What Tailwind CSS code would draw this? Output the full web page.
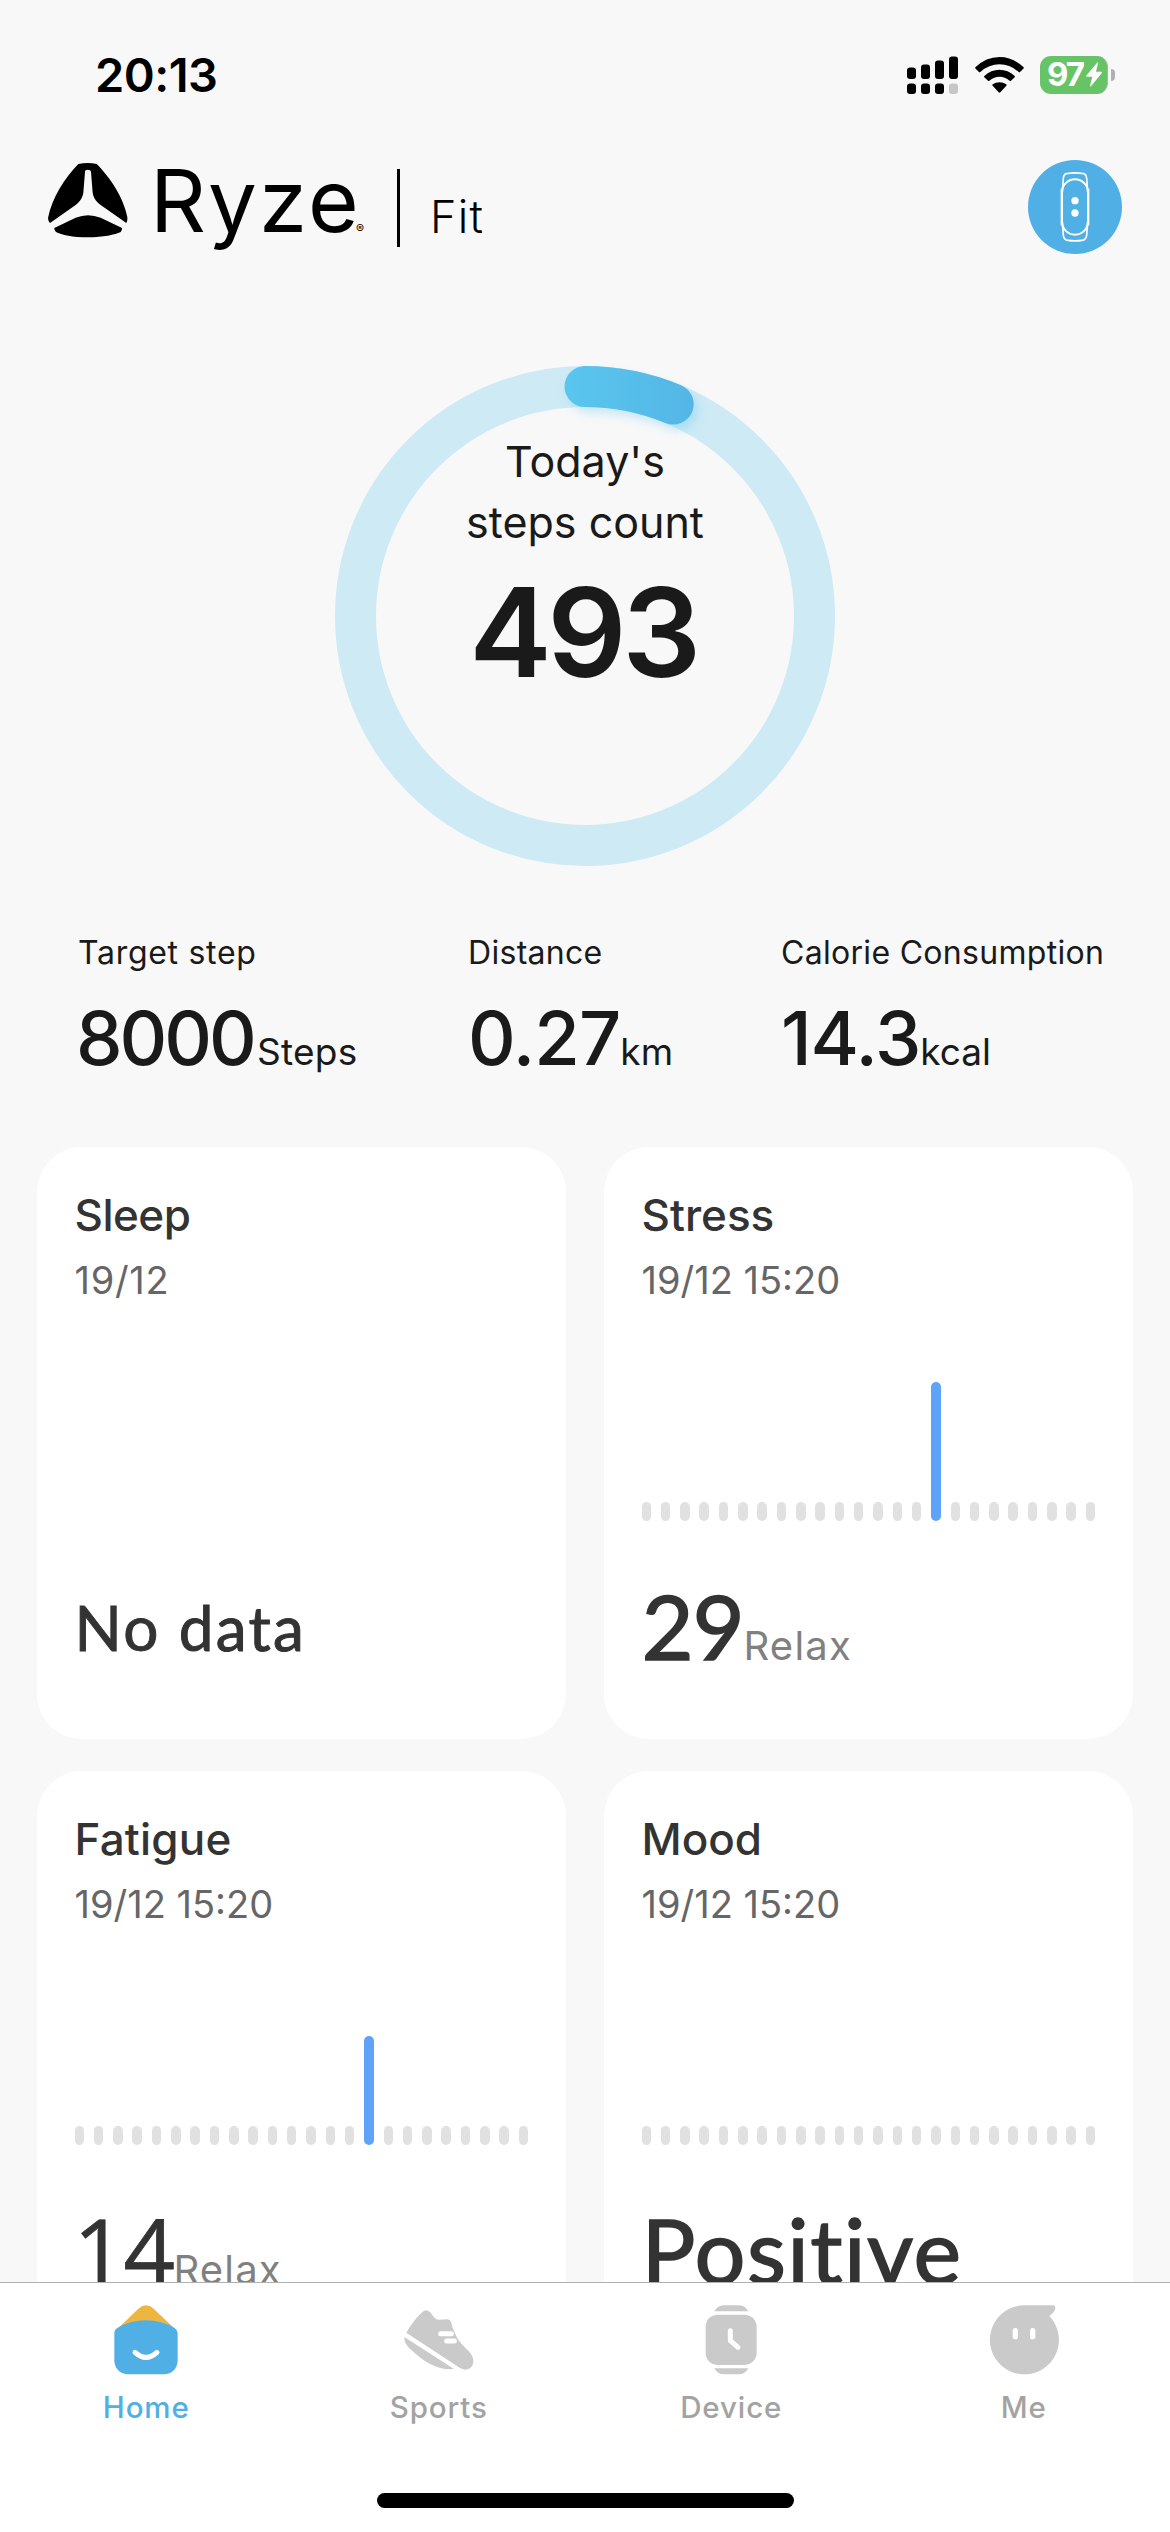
<!DOCTYPE html>
<html lang="en">
<head>
  <meta charset="UTF-8" />
  <title>Ryze Fit</title>
  <script src="https://cdn.jsdelivr.net/npm/@tailwindcss/browser@4"></script>
</head>
<body class="bg-[#f8f8f8] w-[1170px] h-[2532px] overflow-hidden flex flex-col font-['Inter',sans-serif] text-[#1a1a1a]">

  <main class="h-[2282px] shrink-0 overflow-hidden">

    <!-- Status bar -->
    <div class="h-[149px] pl-[95px] pr-[55px] flex justify-between items-center text-black">
      <span class="text-[47px] leading-none font-semibold tracking-[-0.54px]">20:13</span>
      <div class="flex items-center">
        <svg class="w-[51px] h-[38px]" viewBox="0 0 51 38">
          <rect x="0" y="11.5" width="9" height="11.5" rx="3" />
          <rect x="14" y="8.5" width="9" height="14.5" rx="3" />
          <rect x="28" y="4.5" width="9" height="18.5" rx="3" />
          <rect x="42" y="0.5" width="9" height="22.5" rx="3" />
          <rect x="0" y="27.5" width="9" height="10.5" rx="3" />
          <rect x="14" y="27.5" width="9" height="10.5" rx="3" />
          <rect x="28" y="27.5" width="9" height="10.5" rx="3" />
          <rect x="42" y="27.5" width="9" height="10.5" rx="3" fill="#c6c6c6" />
        </svg>
        <svg class="w-[49px] h-[36px] ml-[17px]" viewBox="0 0 147 108">
          <path d="M1 31Q33 0 73.5 0T146 31Q147 33 145 35L135 45Q133 47 131 45Q105 22 73.5 22T16 45Q14 47 12 45L2 35Q0 33 1 31Z" />
          <path d="M28 57Q48 38 73.5 38T119 57Q121 59 119 61L108 71Q106 73 104 71Q90 59 73.5 59T43 71Q41 73 39 71L28 61Q26 59 28 57Z" />
          <path d="M53 82Q62 76 73.5 76T94 82Q96 84 94 86L76 106Q73.5 108 71 106L53 86Q51 84 53 82Z" />
        </svg>
        <div class="ml-[16px] w-[68px] h-[38px] rounded-[11px] bg-[#66c466] border-r border-[#aab4aa] flex items-center pl-[7px] text-white">
          <span class="text-[33px] leading-none font-bold tracking-[-2px]">97</span>
          <svg class="w-[16px] h-[25px] ml-[3px]" viewBox="0 0 48 74" fill="#fff">
            <path d="M34 1Q37 -1 36 3L30 29H46Q49 30 47 33L15 72Q11 75 12 71L19 44H3Q-1 43 1 40Z" />
          </svg>
        </div>
        <div class="ml-[3px] w-[4px] h-[12px] rounded-r-full bg-[#b0b0b0]"></div>
      </div>
    </div>

    <!-- Logo and device button -->
    <header class="h-[105px] pt-[11px] pl-[47px] pr-[48px] flex items-start text-black">
      <svg class="w-[81px] h-[75px] mt-[3px]" viewBox="51 39 243 225">
        <path d="M145 42Q174 36 200 42C240 82 281 142 292 202Q293 213 289 219L212 165C196 152 190 141 188 128L183 66Q182 59 173 59T165 66L160 128C158 141 152 152 137 165L60 219Q54 214 54 204C67 142 104 84 145 42Z" />
        <path d="M73 234L137 203Q174 188 212 203L276 234Q277 240 272 246C255 254 220 262 174 262S94 255 78 246Q72 240 73 234Z" />
      </svg>
      <span class="w-[206px] ml-[22px] -mt-[4px] text-[87px] leading-[90px] tracking-[2.1px]">Ryze</span>
      <span class="w-[9px] mt-[63px] text-[12px] leading-[12px]">®</span>
      <div class="ml-[32px] mt-[9px] w-[3px] h-[78px] bg-black"></div>
      <span class="ml-[30px] mt-[34px] text-[45px] leading-[45px] font-light tracking-[1.2px]">Fit</span>
      <div class="ml-auto w-[94px] h-[94px] rounded-full bg-[#50b0e5] flex items-center justify-center">
        <svg class="w-[30px] h-[70px]" viewBox="0 0 90 210" fill="none" stroke="#fff" stroke-width="6">
          <rect x="6" y="22" width="78" height="166" rx="39" />
          <path d="M4 50V160M86 50V160" stroke-width="4" />
          <path d="M7 60L10 18Q12 4 24 4Q45 1 66 4Q78 4 80 18L83 60M7 150L10 190Q12 204 24 205Q45 208 66 205Q78 204 80 190L83 150" stroke-width="5" />
          <circle cx="45" cy="86" r="11" fill="#fff" stroke="none" />
          <circle cx="45" cy="123" r="11" fill="#fff" stroke="none" />
        </svg>
      </div>
    </header>

    <!-- Step ring -->
    <section class="mt-[112px] grid justify-center">
      <svg class="col-start-1 row-start-1 w-[500px] h-[500px] overflow-visible" viewBox="0 0 500 500" fill="none" stroke-width="41">
        <defs>
          <linearGradient id="arc" gradientUnits="userSpaceOnUse" x1="229" y1="0" x2="359" y2="0">
            <stop offset="0" stop-color="#5ac6ee" />
            <stop offset="1" stop-color="#54b6e6" />
          </linearGradient>
          <filter id="glow" filterUnits="userSpaceOnUse" x="190" y="-40" width="220" height="160">
            <feDropShadow dx="4" dy="6" stdDeviation="5" flood-color="#5ac6ee" flood-opacity="0.3" />
          </filter>
        </defs>
        <circle cx="250" cy="250" r="229.5" stroke="#cdeaf5" />
        <path d="M250 20.5A229.5 229.5 0 0 1 338.2 38.1" stroke="url(#arc)" stroke-linecap="round" filter="url(#glow)" />
      </svg>
      <div class="col-start-1 row-start-1 pt-[65px] text-center">
        <p class="text-[43px] leading-[61px]">Today's<br>steps count</p>
        <p class="mt-[17px] text-[124px] leading-[124px] font-semibold tracking-[-4.4px] -ml-[4px]">493</p>
      </div>
    </section>

    <!-- Daily totals -->
    <section class="mt-[71px] pl-[78px] flex">
      <div class="w-[390px]">
        <p class="text-[32px] leading-[32px] tracking-[0.7px]">Target step</p>
        <p class="mt-[32px] h-[74px] flex items-baseline whitespace-nowrap"><span class="-ml-[2px] text-[74px] leading-[74px] font-medium tracking-[-3px]">8000</span><span class="ml-[3px] text-[37px] leading-[37px] tracking-[0.3px]">Steps</span></p>
      </div>
      <div class="w-[313px]">
        <p class="text-[32px] leading-[32px] tracking-[0.3px]">Distance</p>
        <p class="mt-[32px] h-[74px] flex items-baseline whitespace-nowrap"><span class="text-[74px] leading-[74px] font-medium tracking-[-0.94px]">0.27</span><span class="text-[37px] leading-[37px]">km</span></p>
      </div>
      <div>
        <p class="text-[32px] leading-[32px] tracking-[0.3px]">Calorie Consumption</p>
        <p class="mt-[32px] h-[74px] flex items-baseline whitespace-nowrap"><span class="text-[74px] leading-[74px] font-medium tracking-[-1.1px]">14.3</span><span class="text-[37px] leading-[37px]">kcal</span></p>
      </div>
    </section>

    <!-- Health cards -->
    <section class="mt-[72px] px-[37px] grid grid-cols-2 gap-x-[38px] gap-y-[32px] text-[#333]">
      <div class="h-[592px] rounded-[45px] bg-white pt-[46px] px-[37.5px]">
        <h2 class="text-[44px] leading-[44px] font-medium tracking-[-0.5px]">Sleep</h2>
        <p class="mt-[24px] text-[38px] leading-[38px] tracking-[0.7px] text-[#666]">19/12</p>
        <div class="h-[222px]"></div>
        <p class="mt-[61px] font-['Lato',sans-serif] text-[62px] leading-[90px] tracking-[2.3px] [-webkit-text-stroke:1px_#333]">No data</p>
      </div>
      <div class="h-[592px] rounded-[45px] bg-white pt-[46px] px-[37.5px]">
        <h2 class="text-[44px] leading-[44px] font-medium">Stress</h2>
        <p class="mt-[24px] text-[38px] leading-[38px] text-[#666]">19/12 15:20</p>
        <div class="chart mt-[12px] h-[210px] flex items-end justify-between" data-value="139"></div>
        <p class="mt-[59px] flex items-baseline"><span class="font-['Lato',sans-serif] text-[90px] leading-[90px] tracking-[-1.2px] [-webkit-text-stroke:1.5px_#333]">29</span><span class="text-[40px] leading-[40px] tracking-[1.2px] text-[#808080]">Relax</span></p>
      </div>
      <div class="h-[592px] rounded-[45px] bg-white pt-[46px] px-[37.5px]">
        <h2 class="text-[44px] leading-[44px] font-medium tracking-[0.2px]">Fatigue</h2>
        <p class="mt-[24px] text-[38px] leading-[38px] text-[#666]">19/12 15:20</p>
        <div class="chart mt-[12px] h-[210px] flex items-end justify-between" data-value="109"></div>
        <p class="mt-[59px] flex items-baseline"><span class="-ml-[1px] font-['Open_Sans',sans-serif] text-[90px] leading-[90px] tracking-[-1.5px] [-webkit-text-stroke:0.8px_#333]">14</span><span class="text-[40px] leading-[40px] tracking-[1.2px] text-[#808080]">Relax</span></p>
      </div>
      <div class="h-[592px] rounded-[45px] bg-white pt-[46px] px-[37.5px]">
        <h2 class="text-[44px] leading-[44px] font-medium">Mood</h2>
        <p class="mt-[24px] text-[38px] leading-[38px] text-[#666]">19/12 15:20</p>
        <div class="chart mt-[12px] h-[210px] flex items-end justify-between"></div>
        <p class="mt-[59px] font-['Lato',sans-serif] text-[90px] leading-[90px] tracking-[1.4px] [-webkit-text-stroke:1.5px_#333]">Positive</p>
      </div>
    </section>
  </main>

  <!-- Tab bar -->
  <nav class="flex-1 bg-white border-t border-[#b0b0b0] flex flex-col justify-between">
    <div class="pt-[22px] grid grid-cols-4 text-[29.5px] leading-[30px] font-medium tracking-[0.9px] text-[#a3a3a3]">
      <a class="flex flex-col items-center gap-[17px] text-[#50b0e5]">
        <svg class="w-[64px] h-[70px]" viewBox="0 0 192 210">
          <path d="M7 75L73 11Q96 -9 119 11L186 75L150 110H40Z" fill="#edb641" />
          <path d="M1 84Q1 74 10 69Q48 46 96 46T182 69Q191 76 191 84V168Q188 204 152 208H40Q4 204 1 168Z" fill="#50b0e5" />
          <path d="M63 142Q96 172 129 142" fill="none" stroke="#fff" stroke-width="15" stroke-linecap="round" />
        </svg>
        Home
      </a>
      <a class="flex flex-col items-center gap-[17px]">
        <svg class="w-[70px] h-[70px]" viewBox="0 0 210 210" fill="#cacaca">
          <path d="M7 83Q30 42 59 18Q69 11 80 23L91 38Q97 45 107 44L129 43Q139 43 142 54L146 70L154 87L160 100C175 123 191 133 201 147C216 171 205 194 183 194Q176 193 168 189Z" />
          <path d="M1 96L150 192C105 196 63 175 15 128Q0 114 1 96Z" />
          <path d="M110 86H142M128 108H151" stroke="#fff" stroke-width="15" stroke-linecap="round" />
        </svg>
        Sports
      </a>
      <a class="flex flex-col items-center gap-[17px]">
        <svg class="w-[52px] h-[70px]" viewBox="0 0 156 210" fill="#cacaca">
          <path d="M28 19Q38 1 56 1H102Q120 1 130 19ZM28 190Q38 208 56 208H102Q120 208 130 190Z" />
          <path d="M36 29H120Q148 31 155 60V149Q148 177 120 180H36Q8 177 2 149V60Q8 31 36 29Z" />
          <path d="M76 77V107L99 127" fill="none" stroke="#fff" stroke-width="15" stroke-linecap="round" stroke-linejoin="round" />
        </svg>
        Device
      </a>
      <a class="flex flex-col items-center gap-[17px]">
        <svg class="w-[70px] h-[70px]" viewBox="0 0 210 210" fill="#cacaca">
          <path d="M105 1H193Q199 2 199 9Q198 22 181 33A103.5 103.5 0 1 1 105 1Z" />
          <path d="M79 77V95M131 77V95" stroke="#fff" stroke-width="16" stroke-linecap="round" />
        </svg>
        Me
      </a>
    </div>
    <div class="mx-auto mb-[24px] w-[417px] h-[15px] rounded-full bg-black"></div>
  </nav>

<script>
  // One bar per hour, the only reading is at 15h
  document.querySelectorAll('.chart').forEach(chart => {
    for (let hour = 0; hour < 24; hour++) {
      const bar = document.createElement('div');
      if (hour === 15 && chart.dataset.value) {
        bar.className = "w-[9.5px] rounded-full bg-[#5fa2f9]";
        bar.style.height = chart.dataset.value + 'px';
      } else {
        bar.className = "w-[9.5px] h-[19px] rounded-full bg-[#e1e1e1]";
      }
      chart.appendChild(bar);
    }
  });
</script>

</body>
</html>
